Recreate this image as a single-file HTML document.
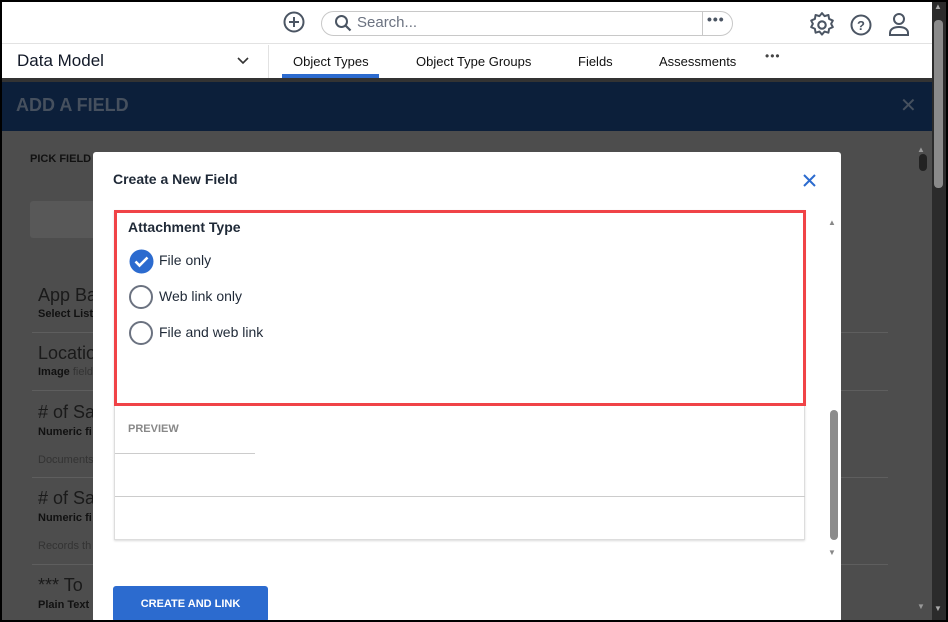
<!DOCTYPE html>
<html><head><style>
*{box-sizing:border-box;margin:0;padding:0}
body{width:948px;height:622px;overflow:hidden;background:#000;font-family:"Liberation Sans",sans-serif;position:relative}
.abs{position:absolute}
</style></head><body>
<div class="abs" style="left:2px;top:2px;width:930px;height:618px;background:#fff;overflow:hidden">
  <div class="abs" style="left:0;top:0;width:930px;height:42px;background:#fff;border-bottom:1px solid #e2e2e2"></div>
  <svg class="abs" style="left:280px;top:8px" width="24" height="24" viewBox="0 0 24 24"><circle cx="12" cy="12" r="9.5" fill="none" stroke="#4b5563" stroke-width="2"/><path d="M12 7v10M7 12h10" stroke="#4b5563" stroke-width="2"/></svg>
  <div class="abs" style="left:319px;top:9px;width:412px;height:25px;border:1px solid #c8c8c8;border-radius:13px"></div>
  <div class="abs" style="left:700px;top:10px;width:1px;height:23px;background:#c8c8c8"></div>
  <svg class="abs" style="left:332px;top:12px" width="18" height="18" viewBox="0 0 18 18"><circle cx="7.5" cy="7.5" r="5.5" fill="none" stroke="#4b5563" stroke-width="2"/><path d="M11.5 11.5l5 5" stroke="#4b5563" stroke-width="2.2"/></svg>
  <div class="abs" style="left:355px;top:12px;font-size:15px;color:#6b7280">Search...</div>
  <div class="abs" style="left:705px;top:9px;font-size:14px;color:#4b5563;font-weight:bold;letter-spacing:1px">•••</div>
  <svg class="abs" style="left:806px;top:9px" width="28" height="28" viewBox="0 0 24 24"><circle cx="12" cy="12" r="3.2" fill="none" stroke="#4b5563" stroke-width="1.8"/><path d="M12 1.8l2.2 2.6 3.3-1 .6 3.4 3.2 1.4-1.5 2.8 1.5 2.8-3.2 1.4-.6 3.4-3.3-1-2.2 2.6-2.2-2.6-3.3 1-.6-3.4-3.2-1.4 1.5-2.8-1.5-2.8 3.2-1.4.6-3.4 3.3 1z" fill="none" stroke="#4b5563" stroke-width="1.7" stroke-linejoin="round"/></svg>
  <svg class="abs" style="left:847px;top:11px" width="24" height="24" viewBox="0 0 24 24"><circle cx="12" cy="12" r="9.5" fill="none" stroke="#4b5563" stroke-width="2"/><text x="12" y="17" font-size="13" font-weight="bold" text-anchor="middle" fill="#4b5563" font-family="Liberation Sans">?</text></svg>
  <svg class="abs" style="left:886px;top:10px" width="22" height="26" viewBox="0 0 22 26"><circle cx="11" cy="7" r="5" fill="none" stroke="#4b5563" stroke-width="2"/><path d="M2 23v-2c0-4 4-6 9-6s9 2 9 6v2z" fill="none" stroke="#4b5563" stroke-width="2"/></svg>
  <div class="abs" style="left:15px;top:49px;font-size:17px;color:#111827">Data Model</div>
  <svg class="abs" style="left:234px;top:54px" width="14" height="10" viewBox="0 0 14 10"><path d="M2 2l5 5 5-5" fill="none" stroke="#333" stroke-width="1.6"/></svg>
  <div class="abs" style="left:266px;top:43px;width:1px;height:33px;background:#e2e2e2"></div>
  <div class="abs" style="left:291px;top:52px;font-size:13px;color:#111">Object Types</div>
  <div class="abs" style="left:280px;top:72px;width:97px;height:4px;background:#2c6bcf"></div>
  <div class="abs" style="left:414px;top:52px;font-size:13px;color:#111">Object Type Groups</div>
  <div class="abs" style="left:576px;top:52px;font-size:13px;color:#111">Fields</div>
  <div class="abs" style="left:657px;top:52px;font-size:13px;color:#111">Assessments</div>
  <div class="abs" style="left:763px;top:47px;font-size:12px;color:#444;letter-spacing:1px">•••</div>
  <div class="abs" style="left:0;top:76px;width:930px;height:4px;background:#333"></div>
  <div class="abs" style="left:0;top:80px;width:930px;height:49px;background:#0c1f3a"></div>
  <div class="abs" style="left:14px;top:93px;font-size:18px;font-weight:bold;color:#46505e">ADD A FIELD</div>
  <div class="abs" style="left:898px;top:91px;font-size:20px;color:#46505e">✕</div>
  <div class="abs" style="left:0;top:129px;width:930px;height:489px;background:#4d4d4d"></div>
  <div class="abs" style="left:28px;top:151px;font-size:11px;font-weight:bold;color:#111">PICK FIELD</div>
  <div class="abs" style="left:28px;top:199px;width:70px;height:37px;background:#585858;border-radius:3px"></div>
  <div class="abs" style="left:36px;top:283px;font-size:18px;color:#1a1a1a">App Ba</div>
  <div class="abs" style="left:36px;top:306px;font-size:11px;font-weight:bold;color:#111">Select List</div>
  <div class="abs" style="left:30px;top:330px;width:856px;height:1px;background:#5e5e5e"></div>
  <div class="abs" style="left:36px;top:341px;font-size:18px;color:#1a1a1a">Locatio</div>
  <div class="abs" style="left:36px;top:364px;font-size:11px;font-weight:bold;color:#111">Image <span style="font-weight:normal;color:#333">field</span></div>
  <div class="abs" style="left:30px;top:388px;width:856px;height:1px;background:#5e5e5e"></div>
  <div class="abs" style="left:36px;top:400px;font-size:18px;color:#1a1a1a"># of Sa</div>
  <div class="abs" style="left:36px;top:424px;font-size:11px;font-weight:bold;color:#111">Numeric fi</div>
  <div class="abs" style="left:36px;top:452px;font-size:11px;color:#333">Documents</div>
  <div class="abs" style="left:30px;top:475px;width:856px;height:1px;background:#5e5e5e"></div>
  <div class="abs" style="left:36px;top:486px;font-size:18px;color:#1a1a1a"># of Sa</div>
  <div class="abs" style="left:36px;top:510px;font-size:11px;font-weight:bold;color:#111">Numeric fi</div>
  <div class="abs" style="left:36px;top:538px;font-size:11px;color:#333">Records th</div>
  <div class="abs" style="left:30px;top:562px;width:856px;height:1px;background:#5e5e5e"></div>
  <div class="abs" style="left:36px;top:573px;font-size:18px;color:#1a1a1a">*** To</div>
  <div class="abs" style="left:36px;top:597px;font-size:11px;font-weight:bold;color:#111">Plain Text</div>
  <div class="abs" style="left:915px;top:143px;font-size:8px;color:#999">▲</div>
  <div class="abs" style="left:917px;top:152px;width:8px;height:17px;background:#222;border-radius:4px"></div>
  <div class="abs" style="left:915px;top:600px;font-size:8px;color:#999">▼</div>
  <div class="abs" style="left:91px;top:150px;width:748px;height:470px;background:#fff;border-radius:3px"></div>
  <div class="abs" style="left:111px;top:169px;font-size:14px;font-weight:bold;color:#1f2937">Create a New Field</div>
  <svg class="abs" style="left:800px;top:171px" width="15" height="15" viewBox="0 0 15 15"><path d="M2 2l11 11M13 2L2 13" stroke="#2c6bcf" stroke-width="2"/></svg>
  <div class="abs" style="left:112px;top:208px;width:691px;height:330px;border:1px solid #ddd;box-shadow:0 1px 2px rgba(0,0,0,.15)"></div>
  <div class="abs" style="left:112px;top:208px;width:692px;height:196px;border:3px solid #f04347"></div>
  <div class="abs" style="left:126px;top:217px;font-size:14px;font-weight:bold;color:#1f2937">Attachment Type</div>
  <svg class="abs" style="left:127px;top:247px" width="25" height="25" viewBox="0 0 25 25"><circle cx="12.5" cy="12.5" r="12" fill="#2c6bcf"/><path d="M6.5 12.5l4 4 8-8" fill="none" stroke="#fff" stroke-width="2.6"/></svg>
  <div class="abs" style="left:157px;top:250px;font-size:14px;color:#1f2937">File only</div>
  <div class="abs" style="left:127px;top:283px;width:24px;height:24px;border:2px solid #6b7280;border-radius:50%"></div>
  <div class="abs" style="left:157px;top:286px;font-size:14px;color:#1f2937">Web link only</div>
  <div class="abs" style="left:127px;top:319px;width:24px;height:24px;border:2px solid #6b7280;border-radius:50%"></div>
  <div class="abs" style="left:157px;top:322px;font-size:14px;color:#1f2937">File and web link</div>
  <div class="abs" style="left:126px;top:421px;font-size:11px;font-weight:bold;color:#888">PREVIEW</div>
  <div class="abs" style="left:113px;top:451px;width:140px;height:1px;background:#ccc"></div>
  <div class="abs" style="left:113px;top:494px;width:690px;height:1px;background:#ccc"></div>
  <div class="abs" style="left:826px;top:216px;font-size:8px;color:#888">▲</div>
  <div class="abs" style="left:828px;top:408px;width:8px;height:130px;background:#8c8c8c;border-radius:4px"></div>
  <div class="abs" style="left:826px;top:546px;font-size:8px;color:#888">▼</div>
  <div class="abs" style="left:111px;top:584px;width:155px;height:36px;background:#2c6bcf;border-radius:3px;color:#fff;font-size:11px;font-weight:bold;text-align:center;line-height:36px">CREATE AND LINK</div>
</div>
<div class="abs" style="left:932px;top:2px;width:14px;height:618px;background:#2b2b2b"></div>
<div class="abs" style="left:934px;top:20px;width:9px;height:168px;background:#8a8a8a;border-radius:4px"></div>
<div class="abs" style="left:934px;top:604px;font-size:8px;color:#aaa">▼</div>
<div class="abs" style="left:934px;top:2px;font-size:8px;color:#aaa">▲</div>
</body></html>
